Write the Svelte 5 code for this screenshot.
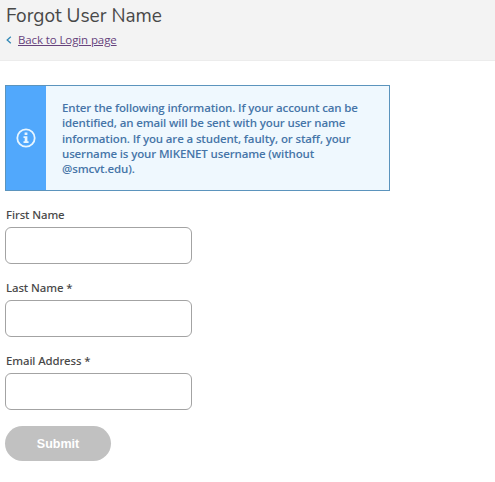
<script lang="ts">
	interface Field {
		id: string;
		label: string;
		required: boolean;
	}

	const fields: Field[] = [
		{ id: 'first-name', label: 'First Name', required: false },
		{ id: 'last-name', label: 'Last Name', required: true },
		{ id: 'email', label: 'Email Address', required: true }
	];

	let values: Record<string, string> = $state({ 'first-name': '', 'last-name': '', email: '' });
	let canSubmit = $derived(fields.every((f) => !f.required || values[f.id].trim() !== ''));

	function handleSubmit(event: SubmitEvent) {
		event.preventDefault();
	}
</script>

<header class="page-header">
	<h1>Forgot User Name</h1>
	<div class="back">
		<svg width="6" height="8" viewBox="0 0 6 8" fill="none" stroke="currentColor" stroke-width="1.3" aria-hidden="true">
			<path d="M4.8 0.8L1.2 4l3.6 3.2" />
		</svg>
		<a href="#login">Back to Login page</a>
	</div>
</header>

<main>
	<div class="notice" role="note">
		<div class="notice-icon">
			<svg width="20" height="20" viewBox="0 0 20 20" aria-hidden="true">
				<circle cx="10" cy="10" r="8.7" fill="none" stroke="currentColor" stroke-width="1.8" />
				<path d="M8.6 4.6h2.8v2.5H8.6zM7.5 8.2h3.9v5h1.2v1.7H7.5v-1.7h1.2V9.9H7.5z" fill="currentColor" />
			</svg>
		</div>
		<p>
			Enter the following information. If your account can be<br />
			identified, an email will be sent with your user name<br />
			information. If you are a student, faulty, or staff, your<br />
			username is your MIKENET username (without<br />
			@smcvt.edu).
		</p>
	</div>

	<form onsubmit={handleSubmit}>
		{#each fields as field (field.id)}
			<div class="field">
				<label for={field.id}>{field.label}{field.required ? ' *' : ''}</label>
				<input id={field.id} type="text" bind:value={values[field.id]} />
			</div>
		{/each}
		<button type="submit" disabled={!canSubmit}>Submit</button>
	</form>
</main>

<style>
	:global(body) {
		background: #fff;
		color: #484848;
		font-family: 'Open Sans', 'Noto Sans', sans-serif;
	}

	.page-header {
		box-sizing: border-box;
		height: 61px;
		padding: 4px 6px 0;
		background: #f3f3f3;
		border-bottom: 1px solid #ececec;
	}

	h1 {
		margin: 0;
		font-family: Nunito, 'Open Sans', sans-serif;
		font-size: 19.05px;
		font-weight: 400;
		line-height: 25px;
		white-space: nowrap;
	}

	.back {
		display: flex;
		align-items: center;
		gap: 6px;
		height: 16px;
		margin-top: 3px;
		color: #3288b5;
	}

	.back a {
		color: #66427c;
		font-size: 11.5px;
		letter-spacing: -0.11px;
		line-height: 16px;
		text-underline-offset: 1px;
	}

	main {
		padding: 24px 5px 0;
	}

	.notice {
		display: flex;
		box-sizing: border-box;
		width: 385px;
		height: 106px;
		border: 1px solid #5b94bd;
		background: #eff8fe;
	}

	.notice-icon {
		display: flex;
		align-items: center;
		justify-content: center;
		width: 40px;
		background: #51a8fc;
		color: #e8f6ff;
	}

	.notice p {
		margin: 0;
		padding: 14px 0 0 16px;
		color: #4675a8;
		font-size: 11.5px;
		font-weight: 600;
		letter-spacing: -0.14px;
		line-height: 15.3px;
		white-space: nowrap;
	}

	form {
		padding-top: 16px;
	}

	.field {
		height: 73px;
	}

	label {
		display: block;
		height: 20px;
		padding-left: 1px;
		font-family: 'Noto Sans', 'Open Sans', sans-serif;
		font-size: 11.4px;
		font-weight: 500;
		letter-spacing: -0.09px;
		line-height: 16px;
	}

	input {
		display: block;
		box-sizing: border-box;
		width: 187px;
		height: 37px;
		padding: 0 10px;
		border: 1px solid #a3a3a3;
		border-radius: 6px;
		background: #fff;
		font: inherit;
		font-size: 12px;
	}

	button {
		display: block;
		width: 106px;
		height: 35px;
		padding: 0;
		border: 0;
		border-radius: 18px;
		background: #c1c1c1;
		color: #fff;
		font-family: 'Liberation Sans', Arial, sans-serif;
		font-size: 12.5px;
		font-weight: 700;
	}

	button:not(:disabled) {
		background: #3288b5;
	}
</style>
